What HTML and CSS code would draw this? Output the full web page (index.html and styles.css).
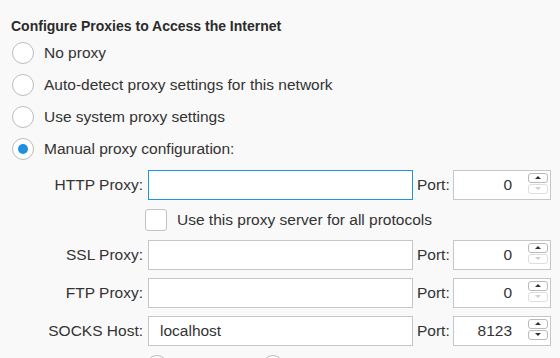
FILE: index.html
```html
<!DOCTYPE html>
<html lang="en">
<head>
  <meta charset="UTF-8" />
  <title>Connection Settings</title>
  <link rel="stylesheet" href="styles.css">
</head>
<body>
  <div class="panel">
    <h2 class="title">Configure Proxies to Access the Internet</h2>

    <div class="options">
      <label class="option"><span class="radio"></span> No proxy</label>
      <label class="option"><span class="radio"></span> Auto-detect proxy settings for this network</label>
      <label class="option"><span class="radio"></span> Use system proxy settings</label>
      <label class="option"><span class="radio checked"></span> Manual proxy configuration:</label>
    </div>

    <div class="manual">
      <div class="label">HTTP Proxy:</div>
      <div class="field focused"></div>
      <div class="port-label">Port:</div>
      <div class="port">
        <span class="port-value">0</span>
        <span class="spinner">
          <span class="step up"></span>
          <span class="step down disabled"></span>
        </span>
      </div>

      <label class="share">
        <span class="checkbox"></span> Use this proxy server for all protocols
      </label>

      <div class="label">SSL Proxy:</div>
      <div class="field"></div>
      <div class="port-label">Port:</div>
      <div class="port">
        <span class="port-value">0</span>
        <span class="spinner">
          <span class="step up"></span>
          <span class="step down disabled"></span>
        </span>
      </div>

      <div class="label">FTP Proxy:</div>
      <div class="field"></div>
      <div class="port-label">Port:</div>
      <div class="port">
        <span class="port-value">0</span>
        <span class="spinner">
          <span class="step up"></span>
          <span class="step down disabled"></span>
        </span>
      </div>

      <div class="label">SOCKS Host:</div>
      <div class="field">localhost</div>
      <div class="port-label">Port:</div>
      <div class="port">
        <span class="port-value">8123</span>
        <span class="spinner">
          <span class="step up"></span>
          <span class="step down"></span>
        </span>
      </div>
    </div>

    <!-- SOCKS v4 / v5 choice, only the tops of the radios are in view -->
    <div class="socks-version">
      <span class="radio" title="SOCKS v4"></span>
      <span class="radio checked" title="SOCKS v5"></span>
    </div>
  </div>
</body>
</html>
```

FILE: styles.css
```css
*, *::before, *::after {
  box-sizing: border-box;
  margin: 0;
  padding: 0;
}
html, body {
  background: #f9f9f9;
  color: #333333;
  font-family: 'Liberation Sans', Arial, sans-serif;
  font-size: 15.5px;
  height: 100%;
  overflow: hidden;
}
.panel {
  padding-top: 18px;
}
.title {
  font-size: 14px;
  font-weight: 700;
  line-height: 17px;
  padding-left: 11px;
  color: #2b2b2b;
}
.options {
  margin-top: 2px;
  padding-left: 12px;
}
.option {
  display: flex;
  align-items: center;
  gap: 10px;
  height: 32px;
}
.radio {
  width: 22px;
  height: 22px;
  border-radius: 50%;
  border: 1px solid #bdbdbd;
  background: #ffffff;
  display: flex;
  align-items: center;
  justify-content: center;
  flex-shrink: 0;
}
.radio.checked::after {
  content: '';
  width: 10px;
  height: 10px;
  border-radius: 50%;
  background: #1f8fe0;
}
.manual {
  margin-top: 5px;
  display: grid;
  grid-template-columns: 148px 265px 40px 98px;
  grid-template-rows: 30px 24px 30px 30px 30px;
  row-gap: 8px;
  align-items: center;
}
.label {
  text-align: right;
  padding-right: 5px;
  white-space: nowrap;
}
.port-label {
  padding-left: 4px;
}
.field, .port {
  height: 30px;
  background: #ffffff;
  border: 1px solid #c6c6c6;
  display: flex;
  align-items: center;
}
.field {
  padding-left: 11px;
}
.field.focused {
  border-color: #1d93e3;
}
.port {
  justify-content: flex-end;
  padding-right: 2px;
}
.port-value {
  margin-right: 16px;
}
.spinner {
  display: flex;
  flex-direction: column;
  gap: 1px;
  margin-top: -4px;
}
.step {
  width: 20px;
  height: 10px;
  border: 1px solid #b9b9b9;
  border-radius: 3px;
  background: #ffffff;
  display: flex;
  align-items: center;
  justify-content: center;
}
.step::after {
  content: '';
  width: 0;
  height: 0;
  border-left: 3px solid transparent;
  border-right: 3px solid transparent;
}
.step.up::after {
  border-bottom: 3px solid #333333;
}
.step.down::after {
  border-top: 3px solid #333333;
}
.step.disabled {
  border-color: #dedede;
}
.step.disabled::after {
  border-top-color: #cfcfcf;
}
.share {
  grid-column: 2 / 5;
  display: flex;
  align-items: center;
  gap: 10px;
  margin-left: -3px;
}
.checkbox {
  width: 22px;
  height: 22px;
  border: 1px solid #c3c3c3;
  border-radius: 3px;
  background: #ffffff;
  flex-shrink: 0;
}
.socks-version {
  margin-top: 9px;
  padding-left: 146px;
  display: flex;
  gap: 94px;
}
```
